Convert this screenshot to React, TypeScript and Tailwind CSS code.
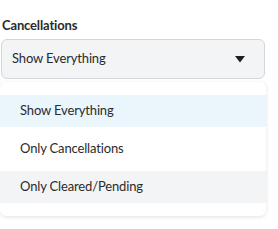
import React from "react";

const options = ["Show Everything", "Only Cancellations", "Only Cleared/Pending"];

export default function App() {
  const selected = 0;
  const hovered = 2;

  return (
    <div
      className="w-[278px] h-[229px] bg-white text-[#2b2b2b] tracking-[-0.15px]"
      style={{ fontFamily: "Lato, 'Open Sans', sans-serif" }}
    >
      <div className="pt-[16px] pl-[2px] pr-[12px]">
        <label className="block text-[13px] font-bold leading-[18px]">Cancellations</label>
        <div className="mt-[5px] ml-[-1px] h-[40px] w-[264px] flex items-center justify-between rounded-[6px] border border-[#d4d6da] bg-[#f3f4f6] pl-[10px] pr-[19px]">
          <span className="text-[13px]">Show Everything</span>
          <svg width="10" height="7" viewBox="0 0 10 7" className="mt-[1px]">
            <path d="M0 0 L10 0 L5 6.5 Z" fill="#1f1f1f" />
          </svg>
        </div>
      </div>
      <div className="mt-[3px] w-[266px] rounded-[6px] bg-white shadow-[0_1px_4px_rgba(0,0,0,0.12)] py-[13px] flex flex-col gap-[6px]">
        {options.map((o, i) => (
          <div
            key={o}
            className={`h-[32px] flex items-center pl-[20px] text-[13px] ${
              i === selected ? "bg-[#ebf5fc]" : i === hovered ? "bg-[#f3f4f6]" : ""
            }`}
          >
            {o}
          </div>
        ))}
      </div>
    </div>
  );
}
